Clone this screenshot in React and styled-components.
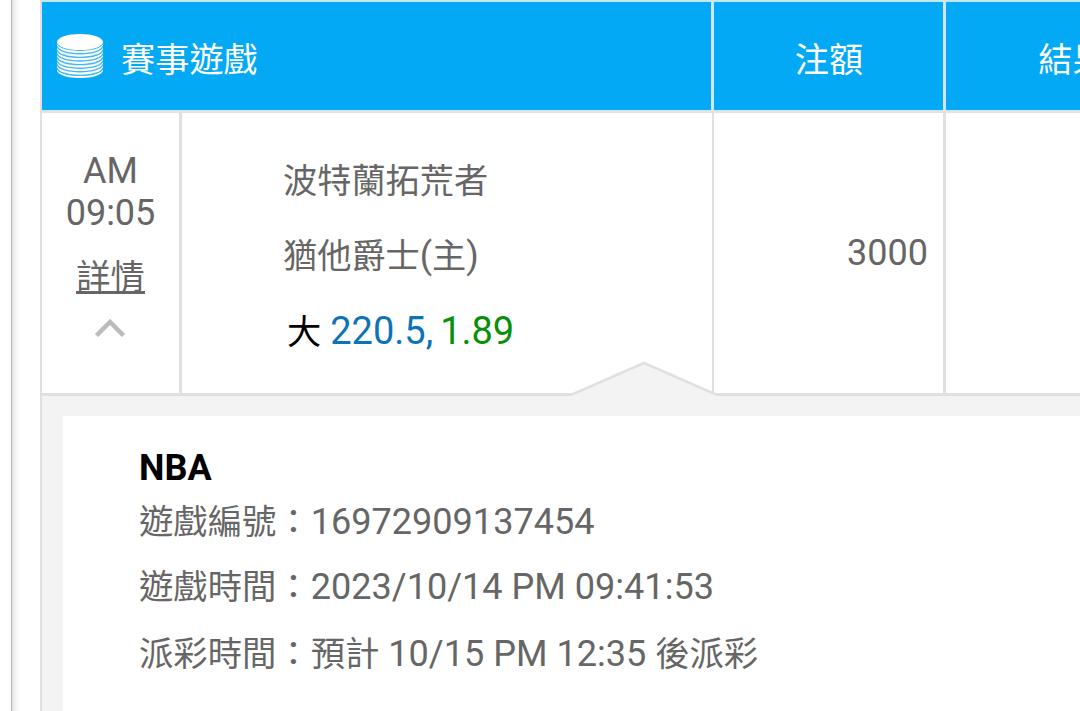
import React, { useState } from "react";
import styled, { createGlobalStyle } from "styled-components";

const GlobalStyle = createGlobalStyle`
  * {
    box-sizing: border-box;
  }
  body {
    margin: 0;
    background: #fff;
    overflow: hidden;
  }
`;
const Wrapper = styled.main`
  width: 1080px;
  height: 711px;
  display: flex;
  overflow: hidden;
  background: #fff;
  color: #666;
  font-family: Roboto, "Noto Sans CJK TC", sans-serif;
  font-size: 36px;
  line-height: 42px;
`;
const PageEdge = styled.div`
  flex: 0 0 29px;
  margin-left: 11px;
  border-left: 1px solid #b4b4b4;
  background: linear-gradient(to right, #e2e2e2, #f6f6f6 4px, #fff 9px);
`;
const Table = styled.section`
  flex: 0 0 1158px;
  display: flex;
  flex-direction: column;
  border-left: 2px solid #e0e0e0;
`;
const HeaderRow = styled.div`
  flex: 0 0 113px;
  display: grid;
  grid-template-columns: 672px 232px 252px;
  border-top: 2px solid #c5e6f5;
  border-bottom: 3px solid #dbe5e9;
  background: #03a9f5;
  color: #fff;
`;
const HeaderCell = styled.div`
  display: flex;
  align-items: center;
  justify-content: ${({ $start }) => ($start ? "flex-start" : "center")};
  gap: 17px;
  padding: ${({ $start }) => ($start ? "1px 0 0 14px" : "1px 0 0 1px")};
  border-right: ${({ $line }) => $line}px solid #d5e5ec;
`;
const BodyRow = styled.div`
  flex: 0 0 283px;
  display: grid;
  grid-template-columns: 140px 532px 232px 252px;
  border-bottom: 3px solid #e0e0e0;
  position: relative;
`;
const BodyCell = styled.div`
  border-right: ${({ $line }) => $line}px solid #e0e0e0;
`;
const TimeCell = styled(BodyCell)`
  display: flex;
  flex-direction: column;
  align-items: center;
  padding-top: 37px;
`;
// 中文字級比數字略小
const Cjk = styled.span`
  font-family: "Noto Sans CJK TC", sans-serif;
  font-size: 34.2px;
`;
const DetailButton = styled.button`
  display: flex;
  flex-direction: column;
  align-items: center;
  margin-top: 20px;
  padding: 0;
  border: none;
  background: none;
  color: inherit;
  line-height: 40px;
  cursor: pointer;
`;
const DetailLabel = styled(Cjk)`
  height: 40px;
  border-bottom: 3px solid #666;
`;
const Chevron = styled.svg`
  margin-top: 24px;
  transform: ${({ $open }) => ($open ? "none" : "rotate(180deg)")};
`;
const GameCell = styled(BodyCell)`
  padding: 44px 0 0 101px;
`;
const Team = styled.div`
  height: 75px;
  display: flex;
  align-items: baseline;
`;
const Bet = styled.div`
  display: flex;
  align-items: baseline;
  padding: 1px 0 0 4px;
  font-size: 38px;
`;
const Pick = styled(Cjk)`
  color: #000;
  margin-right: 9px;
`;
const Line = styled.span`
  color: #0c73b9;
  margin-right: 7px;
`;
const Odds = styled.span`
  color: #089008;
`;
const AmountCell = styled(BodyCell)`
  display: flex;
  align-items: center;
  justify-content: flex-end;
  padding-right: 15px;
`;
const Pointer = styled.svg`
  position: absolute;
  left: 527px;
  bottom: -3px;
`;
const Detail = styled.div`
  flex: 1;
  padding: 20px 0 0 21px;
  background: #f3f3f3;
`;
const DetailPanel = styled.div`
  height: 100%;
  padding: 30px 0 0 76px;
  background: #fff;
`;
const League = styled.h2`
  margin: 0 0 -3px;
  color: #000;
  font-size: 36px;
  line-height: 44px;
  font-weight: 700;
`;
const DetailLine = styled.p`
  margin: 0;
  height: ${({ $height }) => $height}px;
  font-size: 36.1px;
  line-height: ${({ $height }) => $height}px;
  white-space: pre;
  ${Cjk} {
    font-size: 34.35px;
  }
`;
const Coins = styled.svg`
  margin-bottom: 2px;
`;

function CoinsIcon() {
  return (
    <Coins width="48" height="46" viewBox="0 0 48 46">
      <path d="M1 9v28c0 4.500 10 8 23 8s23-3.500 23-8V9z" fill="#fff" />
      <g fill="none" stroke="#3eb9f3" strokeWidth="1.400">
        {[0, 1, 2, 3, 4, 5, 6, 7].map((i) => (
          <path key={i} d={`M1 ${9.6 + i * 3.6}c1 4.500 10 7.600 23 7.600s22-3.100 23-7.600`} />
        ))}
      </g>
      <ellipse cx="24" cy="9" rx="23" ry="8" fill="#fff" />
    </Coins>
  );
}

function App() {
  const [open, setOpen] = useState(true);
  const toggleDetail = () => {
    setOpen(!open);
  };
  return (
    <Wrapper>
      <GlobalStyle />
      <PageEdge />
      <Table>
        <HeaderRow>
          <HeaderCell $start $line={3}>
            <CoinsIcon />
            <Cjk>賽事遊戲</Cjk>
          </HeaderCell>
          <HeaderCell $line={3}>
            <Cjk>注額</Cjk>
          </HeaderCell>
          <HeaderCell $line={0}>
            <Cjk>結果</Cjk>
          </HeaderCell>
        </HeaderRow>
        <BodyRow>
          <TimeCell $line={3}>
            <span>AM</span>
            <span>09:05</span>
            <DetailButton onClick={toggleDetail}>
              <DetailLabel>詳情</DetailLabel>
              <Chevron $open={open} width="32" height="20" viewBox="0 0 32 20">
                <path d="M2.500 17.500L16 4l13.500 13.500" fill="none" stroke="#bbb" strokeWidth="4.500" />
              </Chevron>
            </DetailButton>
          </TimeCell>
          <GameCell $line={2}>
            <Team>
              <Cjk>波特蘭拓荒者</Cjk>
            </Team>
            <Team>
              <Cjk>猶他爵士</Cjk>
              <span>(</span>
              <Cjk>主</Cjk>
              <span>)</span>
            </Team>
            <Bet>
              <Pick>大</Pick>
              <Line>220.5,</Line>
              <Odds>1.89</Odds>
            </Bet>
          </GameCell>
          <AmountCell $line={3}>3000</AmountCell>
          <BodyCell $line={0} />
          {open && (
            <Pointer width="150" height="36" viewBox="0 0 150 36">
              <path d="M3 36v-1.500L75 3l72 31.500V36z" fill="#f3f3f3" />
              <path d="M0 34.500h3L75 3l72 31.500h3" fill="none" stroke="#e0e0e0" strokeWidth="2.600" />
            </Pointer>
          )}
        </BodyRow>
        {open && (
          <Detail>
            <DetailPanel>
              <League>NBA</League>
              <DetailLine $height={64}>
                <Cjk>遊戲編號：</Cjk>16972909137454
              </DetailLine>
              <DetailLine $height={66}>
                <Cjk>遊戲時間：</Cjk>2023/10/14 PM 09:41:53
              </DetailLine>
              <DetailLine $height={68}>
                <Cjk>派彩時間：預計</Cjk> 10/15 PM 12:35 <Cjk>後派彩</Cjk>
              </DetailLine>
            </DetailPanel>
          </Detail>
        )}
      </Table>
    </Wrapper>
  );
}
export default App;
